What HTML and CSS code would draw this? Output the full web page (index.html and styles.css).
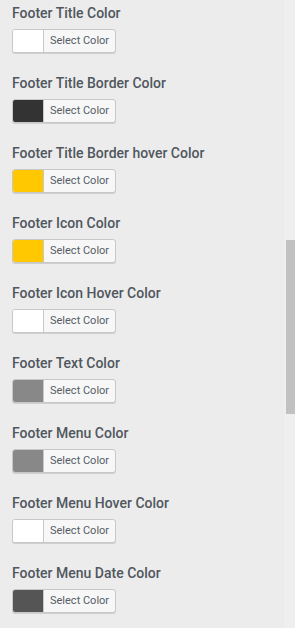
FILE: index.html
```html
<!DOCTYPE html>
<html>
<head>
<meta charset="utf-8">
<link rel="stylesheet" href="styles.css">
</head>
<body>
<div class="page">
  <div class="list">
    <div class="field"><div class="label">Footer Title Color</div><div class="picker"><span class="swatch white"></span><span class="btn-text">Select Color</span></div></div>
    <div class="field"><div class="label">Footer Title Border Color</div><div class="picker"><span class="swatch dark"></span><span class="btn-text">Select Color</span></div></div>
    <div class="field"><div class="label">Footer Title Border hover Color</div><div class="picker"><span class="swatch yellow"></span><span class="btn-text">Select Color</span></div></div>
    <div class="field"><div class="label">Footer Icon Color</div><div class="picker"><span class="swatch yellow"></span><span class="btn-text">Select Color</span></div></div>
    <div class="field"><div class="label">Footer Icon Hover Color</div><div class="picker"><span class="swatch white"></span><span class="btn-text">Select Color</span></div></div>
    <div class="field"><div class="label">Footer Text Color</div><div class="picker"><span class="swatch grey"></span><span class="btn-text">Select Color</span></div></div>
    <div class="field"><div class="label">Footer Menu Color</div><div class="picker"><span class="swatch grey"></span><span class="btn-text">Select Color</span></div></div>
    <div class="field"><div class="label">Footer Menu Hover Color</div><div class="picker"><span class="swatch white"></span><span class="btn-text">Select Color</span></div></div>
    <div class="field"><div class="label">Footer Menu Date Color</div><div class="picker"><span class="swatch charcoal"></span><span class="btn-text">Select Color</span></div></div>
  </div>
  <div class="track"><div class="thumb"></div></div>
</div>
</body>
</html>
```
FILE: styles.css
```css
html, body {
  margin: 0;
  padding: 0;
  background: #ececec;
  height: 628px;
  overflow: hidden;
}
.page {
  display: flex;
  height: 628px;
}
.list {
  flex: 1;
  padding: 4px 0 0 12px;
  font-family: Roboto, "Liberation Sans", sans-serif;
}
.field {
  height: 70px;
}
.label {
  font-size: 14px;
  font-weight: 500;
  color: #50575e;
  line-height: 18px;
  height: 25px;
  white-space: nowrap;
}
.picker {
  display: inline-flex;
  align-items: stretch;
  height: 22px;
  border: 1px solid #c8c8c8;
  border-radius: 3px;
  background: #f7f7f7;
  box-shadow: 0 1px 0 #cfcfcf;
  overflow: hidden;
}
.swatch {
  width: 30px;
  border-right: 1px solid #c8c8c8;
}
.white { background: #ffffff; }
.dark { background: #333333; }
.yellow { background: #ffc800; }
.grey { background: #888888; }
.charcoal { background: #555555; }
.btn-text {
  font-size: 11px;
  color: #555d66;
  line-height: 22px;
  padding: 0 6px 0 6px;
}
.track {
  width: 11px;
  background: #efefef;
  display: flex;
  justify-content: flex-end;
}
.thumb {
  width: 9px;
  height: 174px;
  margin-top: 240px;
  background: #c1c1c1;
}
```
